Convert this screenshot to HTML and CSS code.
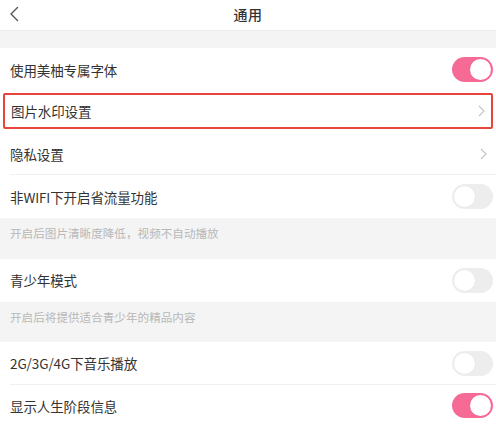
FILE: index.html
```html
<!DOCTYPE html>
<html lang="zh">
<head>
<meta charset="utf-8">
<link rel="stylesheet" href="styles.css">
</head>
<body>
<div class="page">
  <header class="nav">
    <svg class="back" width="10" height="16" viewBox="0 0 10 16"><path d="M8.5 1.5 L2 8 L8.5 14.5" fill="none" stroke="#555" stroke-width="1.4" stroke-linecap="round" stroke-linejoin="round"/></svg>
    <div class="title">通用</div>
  </header>
  <div class="gap"></div>
  <div class="row"><span class="label">使用美柚专属字体</span><span class="toggle on"><span class="knob"></span></span></div>
  <div class="row boxed"><span class="label">图片水印设置</span><svg class="chev" width="7" height="12" viewBox="0 0 7 12"><path d="M1 1 L6 6 L1 11" fill="none" stroke="#c4c4c4" stroke-width="1.1"/></svg></div>
  <div class="row divided"><span class="label">隐私设置</span><svg class="chev" width="7" height="12" viewBox="0 0 7 12"><path d="M1 1 L6 6 L1 11" fill="none" stroke="#c4c4c4" stroke-width="1.1"/></svg></div>
  <div class="row"><span class="label">非WIFI下开启省流量功能</span><span class="toggle"><span class="knob"></span></span></div>
  <div class="note">开启后图片清晰度降低，视频不自动播放</div>
  <div class="row late"><span class="label">青少年模式</span><span class="toggle"><span class="knob"></span></span></div>
  <div class="note second">开启后将提供适合青少年的精品内容</div>
  <div class="row divided late"><span class="label">2G/3G/4G下音乐播放</span><span class="toggle"><span class="knob"></span></span></div>
  <div class="row late"><span class="label">显示人生阶段信息</span><span class="toggle on"><span class="knob"></span></span></div>
</div>
</body>
</html>
```
FILE: styles.css
```css
* { box-sizing: border-box; }
html, body { margin: 0; padding: 0; background: #fff; }
body { font-family: "Noto Sans CJK SC", "Liberation Sans", sans-serif; color: #333; overflow: hidden; }
.page { width: 496px; height: 425px; overflow: hidden; }
.nav { height: 31px; display: flex; align-items: center; justify-content: center; position: relative; border-bottom: 1px solid #ededed; }
.back { position: absolute; left: 9px; top: 6px; }
.title { font-size: 14px; font-weight: 500; color: #333; letter-spacing: 0.5px; margin-top: -3px; }
.gap { height: 17px; background: #f4f4f4; }
.row { height: 43px; display: flex; align-items: center; justify-content: space-between; padding: 0 3px 0 10px; background: #fff; position: relative; }
.row.late { height: 42.5px; }
.label { font-size: 13.5px; color: #333; letter-spacing: -0.1px; }
.row.boxed { border: 2px solid #e8443c; border-radius: 2px; margin: 2px 3px 0 3px; height: 36px; padding-left: 6px; padding-right: 6px; }
.row.boxed + .row { margin-top: 3px; }
.row.divided::after { content: ""; position: absolute; left: 10px; right: 0; bottom: 0; height: 1px; background: #f0f0f0; }
.chev { margin-right: 0; }
.row.divided .chev { margin-right: 6px; }
.toggle { width: 41px; height: 25px; border-radius: 13px; background: #ededed; position: relative; display: block; }
.toggle .knob { position: absolute; top: 2px; left: 2px; width: 21px; height: 21px; border-radius: 50%; background: #fff; box-shadow: 0 0 1px rgba(0,0,0,0.08); }
.toggle.on { background: #f56b96; }
.toggle.on .knob { left: 18px; }
.note { height: 41px; background: #f4f4f4; font-size: 11.6px; color: #b8b8b8; padding: 7px 10px 0; line-height: 16px; }
.note.second { height: 40.5px; }
```
